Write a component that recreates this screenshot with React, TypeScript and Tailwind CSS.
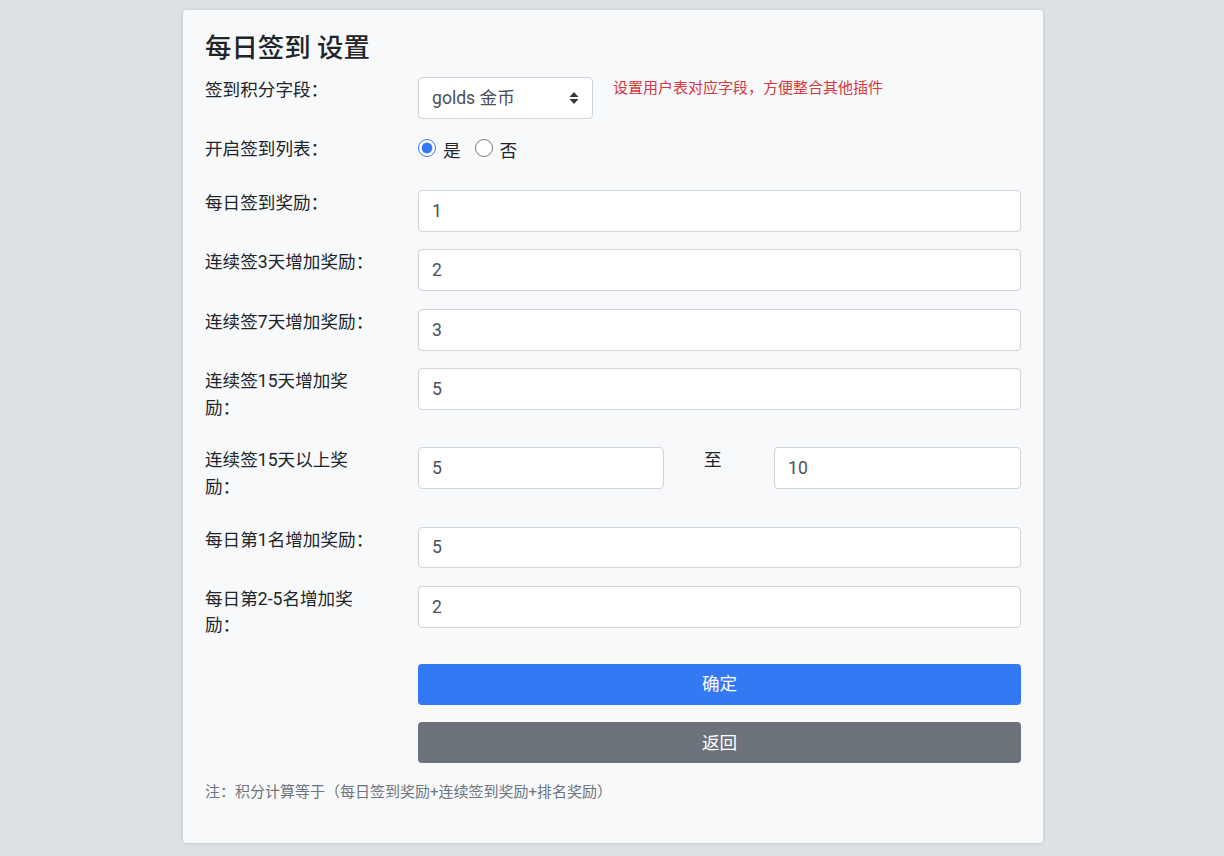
const font = "font-['Roboto','Noto_Sans_CJK_SC',sans-serif]";

function Label({ children }: { children: React.ReactNode }) {
  return (
    <div className="w-[213px] shrink-0">
      <label className="block max-w-[172px] pb-[8.8px] text-[17.6px] leading-[26.4px] text-[#212529]">
        {children}
      </label>
    </div>
  );
}

function TextInput({ value }: { value: string }) {
  return (
    <input
      type="text"
      defaultValue={value}
      className="h-[41.8px] w-full rounded-[4px] border border-[#ced4da] bg-white px-[13px] text-[17.6px] text-[#495057] outline-none"
    />
  );
}

const rows = [
  { label: "每日签到奖励：", value: "1" },
  { label: "连续签3天增加奖励：", value: "2" },
  { label: "连续签7天增加奖励：", value: "3" },
  { label: "连续签15天增加奖励：", value: "5" },
];

const rowsAfter = [
  { label: "每日第1名增加奖励：", value: "5" },
  { label: "每日第2-5名增加奖励：", value: "2" },
];

export default function App() {
  return (
    <div className={`min-h-[856px] bg-[#dee1e4] pt-[10px] ${font}`}>
      <div className="ml-[183px] w-[860px] rounded-[4px] bg-[#f8f9fa] px-[22px] pt-[22px] pb-[22px] shadow-[0_0_4px_rgba(0,0,0,0.12)]">
        <h1 className="mb-[13px] text-[26.4px] font-medium leading-[32px] text-[#212529]">每日签到 设置</h1>

        <div className="mb-[17.6px] flex items-start">
          <Label>签到积分字段：</Label>
          <div className="flex items-start gap-5">
            <div className="flex h-[41.8px] w-[175px] items-center justify-between rounded-[4px] border border-[#ced4da] bg-white px-[13px] text-[17.6px] text-[#495057]">
              <span>golds 金币</span>
              <svg width="10" height="14" viewBox="0 0 10 14">
                <path d="M5 1 L9.5 6 H0.5 Z" fill="#343a40" />
                <path d="M5 13 L9.5 8 H0.5 Z" fill="#343a40" />
              </svg>
            </div>
            <span className="text-[15px] leading-[23px] text-[#d9363e]">设置用户表对应字段，方便整合其他插件</span>
          </div>
        </div>

        <div className="mb-[17.6px] flex min-h-[36px] items-start">
          <Label>开启签到列表：</Label>
          <div className="flex items-start pt-[3px] text-[17.6px] leading-[18px] text-[#212529]">
            <label className="flex items-start">
              <input type="radio" name="list" defaultChecked className="m-0 h-[18px] w-[18px] accent-[#3479f4]" />
              <span className="ml-[7px] mt-[3px]">是</span>
            </label>
            <label className="ml-[14px] flex items-start">
              <input type="radio" name="list" className="m-0 h-[18px] w-[18px] accent-[#3479f4]" />
              <span className="ml-[7px] mt-[3px]">否</span>
            </label>
          </div>
        </div>

        {rows.map((r) => (
          <div key={r.label} className="mb-[17.6px] flex items-start">
            <Label>{r.label}</Label>
            <TextInput value={r.value} />
          </div>
        ))}

        <div className="mb-[17.6px] flex items-start">
          <Label>连续签15天以上奖励：</Label>
          <div className="grid w-full grid-cols-[246px_1fr_247px] items-start">
            <TextInput value="5" />
            <span className="pl-[40px] text-[17.6px] leading-[26.4px] text-[#212529]">至</span>
            <TextInput value="10" />
          </div>
        </div>

        {rowsAfter.map((r) => (
          <div key={r.label} className="mb-[17.6px] flex items-start">
            <Label>{r.label}</Label>
            <TextInput value={r.value} />
          </div>
        ))}

        <div className="-mt-[1.5px] mb-[17.6px] flex">
          <div className="w-[213px] shrink-0" />
          <button className="h-[41px] w-full rounded-[4px] bg-[#3479f4] text-[17.6px] text-white">确定</button>
        </div>
        <div className="mb-[17.6px] flex">
          <div className="w-[213px] shrink-0" />
          <button className="h-[41px] w-full rounded-[4px] bg-[#6c737b] text-[17.6px] text-white">返回</button>
        </div>

        <p className="mb-[17.6px] text-[15px] leading-[23px] text-[#6c757d]">注：积分计算等于（每日签到奖励+连续签到奖励+排名奖励）</p>
      </div>
    </div>
  );
}
